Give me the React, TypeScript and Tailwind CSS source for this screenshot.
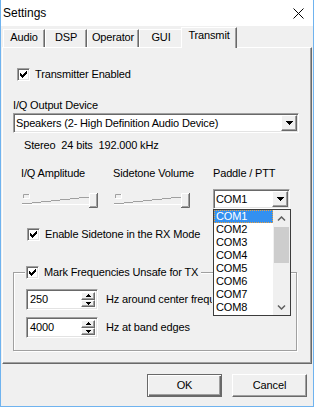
import React from "react";

const raised =
  "border border-t-white border-l-white border-r-[#696969] border-b-[#696969] shadow-[inset_-1px_-1px_0_#a0a0a0]";
const sunken =
  "border border-t-[#a0a0a0] border-l-[#a0a0a0] border-r-white border-b-white shadow-[inset_1px_1px_0_#696969,inset_-1px_-1px_0_#e3e3e3]";

const tabs = [
  { label: "Audio", w: "w-[42px]" },
  { label: "DSP", w: "w-[42px]" },
  { label: "Operator", w: "w-[52px]" },
  { label: "GUI", w: "w-[44px]" },
];

const ports = ["COM1", "COM2", "COM3", "COM4", "COM5", "COM6", "COM7", "COM8"];

function CheckBox() {
  const tops = [2, 3, 4, 3, 2, 1, 0];
  return (
    <div className={`${sunken} w-[13px] h-[13px] shrink-0 bg-white flex items-center justify-center`}>
      <svg width="7" height="7" viewBox="0 0 7 7" className="block">
        {tops.map((y, x) => (
          <rect key={x} x={x} y={y} width="1" height="3" fill="#000" />
        ))}
      </svg>
    </div>
  );
}

function DropButton() {
  return (
    <div className={`${raised} w-[16px] h-[16px] shrink-0 bg-[#f0f0f0] flex items-center justify-center`}>
      <svg width="7" height="4" viewBox="0 0 7 4" className="block">
        <path d="M0 0h7v1h-1v1h-1v1h-1v1h-1v-1h-1v-1h-1v-1h-1z" fill="#000" />
      </svg>
    </div>
  );
}

function SpinBox({ value }: { value: string }) {
  return (
    <div className={`${sunken} w-[72px] h-[21px] shrink-0 bg-white flex items-center pl-[2px] pr-[2px]`}>
      <span className="flex-1 pl-[1px]">{value}</span>
      <div className="flex flex-col w-[14px] h-[15px]">
        <div className={`${raised} flex-1 bg-[#f0f0f0] flex items-center justify-center`}>
          <svg width="5" height="3" viewBox="0 0 5 3" className="block">
            <path d="M2 0h1v1h1v1h1v1h-5v-1h1v-1h1z" fill="#000" />
          </svg>
        </div>
        <div className={`${raised} flex-1 bg-[#f0f0f0] flex items-center justify-center`}>
          <svg width="5" height="3" viewBox="0 0 5 3" className="block">
            <path d="M0 0h5v1h-1v1h-1v1h-1v-1h-1v-1h-1z" fill="#000" />
          </svg>
        </div>
      </div>
    </div>
  );
}

function Slider() {
  const steps = [0, 10, 19, 29, 38, 48, 57, 67];
  return (
    <svg width="77" height="16" viewBox="0 0 77 16" className="block">
      <path d="M1.5 5V1.5H7" stroke="#a0a0a0" fill="none" />
      <path d="M1.5 5.5H7.5V1" stroke="#fff" fill="none" />
      {steps.slice(0, 7).map((x, i) => (
        <path key={i} d={`M${x} ${10.5 - i}H${steps[i + 1]}`} stroke="#a0a0a0" fill="none" />
      ))}
      <path d="M0 11.5H67" stroke="#fff" fill="none" />
      <rect x="67" y="0" width="9" height="15" fill="#f0f0f0" />
      <path d="M67.5 15V0.5H76" stroke="#fff" fill="none" />
      <path d="M67 14.5H75.5V0" stroke="#696969" fill="none" />
      <path d="M68 13.5H74.5V1" stroke="#a0a0a0" fill="none" />
    </svg>
  );
}

function Chevron({ down }: { down?: boolean }) {
  return (
    <svg width="9" height="6" viewBox="0 0 9 6" className="block">
      <path
        d={down ? "M1 1.5L4.5 5L8 1.5" : "M1 4.5L4.5 1L8 4.5"}
        stroke="#606060"
        strokeWidth="1.5"
        fill="none"
      />
    </svg>
  );
}

export default function App() {
  return (
    <div className="w-[314px] h-[407px] flex flex-col bg-[#f0f0f0] border-x border-b border-[#6fb3ef] font-['Liberation_Sans',Arial,sans-serif] text-[11px] leading-[13px] tracking-[-0.15px] text-black">
      <div className="h-[26px] shrink-0 bg-white flex items-center justify-between pl-[2px] pr-[9px]">
        <span className="text-[12px] leading-[14px] tracking-normal">Settings</span>
        <svg width="11" height="11" viewBox="0 0 11 11" className="block">
          <path d="M0.5 0.5L10.5 10.5M10.5 0.5L0.5 10.5" stroke="#000" strokeWidth="1" />
        </svg>
      </div>

      <div className="ml-[1px] mt-[1px] w-[310px]">
        <div className="flex items-end h-[20px] pl-[1px]">
          {tabs.map((t) => (
            <div
              key={t.label}
              className={`${t.w} h-[18px] border-t border-l border-r border-t-white border-l-white border-r-[#696969] shadow-[inset_-1px_0_0_#a0a0a0] flex justify-center pt-[1px]`}
            >
              {t.label}
            </div>
          ))}
          <div className="relative z-10 -ml-[2px] -mb-px w-[56px] h-[21px] bg-[#f0f0f0] border-t border-l border-r border-t-white border-l-white border-r-[#696969] shadow-[inset_-1px_0_0_#a0a0a0] flex justify-center pt-[1px]">
            Transmit
          </div>
        </div>

        <div className="h-[317px] flex flex-col border border-t-white border-l-white border-r-[#696969] border-b-[#696969] shadow-[inset_-1px_-1px_0_#a0a0a0]">
          <div className="flex items-center gap-[5px] mt-[20px] ml-[14px]">
            <CheckBox />
            <span>Transmitter Enabled</span>
          </div>

          <div className="mt-[18px] ml-[10px]">I/Q Output Device</div>
          <div className={`${sunken} mt-[1px] ml-[10px] w-[286px] h-[20px] bg-white flex items-center p-[1px]`}>
            <span className="flex-1 pl-[1px]">Speakers (2- High Definition Audio Device)</span>
            <DropButton />
          </div>
          <div className="mt-[6px] ml-[21px] whitespace-pre">Stereo  24 bits  192.000 kHz</div>

          <div className="flex mt-[15px] ml-[18px] h-[42px]">
            <div className="w-[92px] flex flex-col">
              <span>I/Q Amplitude</span>
              <div className="mt-[13px] ml-[1px]">
                <Slider />
              </div>
            </div>
            <div className="w-[100px] flex flex-col">
              <span>Sidetone Volume</span>
              <div className="mt-[13px] ml-[1px]">
                <Slider />
              </div>
            </div>
            <div className="flex flex-col">
              <span>Paddle / PTT</span>
              <div className="relative mt-[9px] w-[77px]">
                <div className={`${sunken} w-[77px] h-[20px] bg-white flex items-center p-[1px]`}>
                  <span className="flex-1 pl-[1px]">COM1</span>
                  <DropButton />
                </div>
                <div className="absolute left-0 top-full z-20 w-[78px] h-[107px] border border-[#3c3c3c] bg-white flex">
                  <div className="flex-1 flex flex-col">
                    {ports.map((p, i) =>
                      i === 0 ? (
                        <div
                          key={p}
                          className="h-[13px] leading-[11px] pl-[1px] bg-[#3390f0] text-white border border-dotted border-[#e8a040]"
                        >
                          {p}
                        </div>
                      ) : (
                        <div key={p} className="h-[13px] pl-[2px]">
                          {p}
                        </div>
                      )
                    )}
                  </div>
                  <div className="w-[17px] bg-[#f0f0f0] flex flex-col">
                    <div className="h-[17px] flex items-center justify-center">
                      <Chevron />
                    </div>
                    <div className="h-[36px] mx-[1px] bg-[#cdcdcd]" />
                    <div className="flex-1" />
                    <div className="h-[17px] flex items-center justify-center">
                      <Chevron down />
                    </div>
                  </div>
                </div>
              </div>
            </div>
          </div>

          <div className="flex items-center gap-[5px] mt-[19px] ml-[24px]">
            <CheckBox />
            <span>Enable Sidetone in the RX Mode</span>
          </div>

          <div className="mt-[31px] ml-[10px] w-[284px] border border-[#a0a0a0] shadow-[inset_1px_1px_0_#fff,1px_1px_0_#fff] pb-[12px]">
            <div className="-mt-[7px] ml-[11px] w-fit flex items-center gap-[5px] bg-[#f0f0f0] pl-[1px] pr-[3px]">
              <CheckBox />
              <span>Mark Frequencies Unsafe for TX</span>
            </div>
            <div className="flex items-center gap-[8px] mt-[10px] ml-[12px]">
              <SpinBox value="250" />
              <span className="w-[106px] overflow-hidden whitespace-nowrap">Hz around center frequency</span>
            </div>
            <div className="flex items-center gap-[8px] mt-[7px] ml-[12px]">
              <SpinBox value="4000" />
              <span>Hz at band edges</span>
            </div>
          </div>
        </div>
      </div>

      <div className="flex justify-end gap-[10px] pr-[6px] mt-[10px]">
        <button className="w-[75px] h-[23px] border border-[#696969] shadow-[inset_1px_1px_0_#fff,inset_-1px_-1px_0_#696969,inset_-2px_-2px_0_#a0a0a0] bg-[#f0f0f0] flex items-center justify-center">
          OK
        </button>
        <button className={`${raised} w-[75px] h-[23px] bg-[#f0f0f0] flex items-center justify-center`}>
          Cancel
        </button>
      </div>
    </div>
  );
}
